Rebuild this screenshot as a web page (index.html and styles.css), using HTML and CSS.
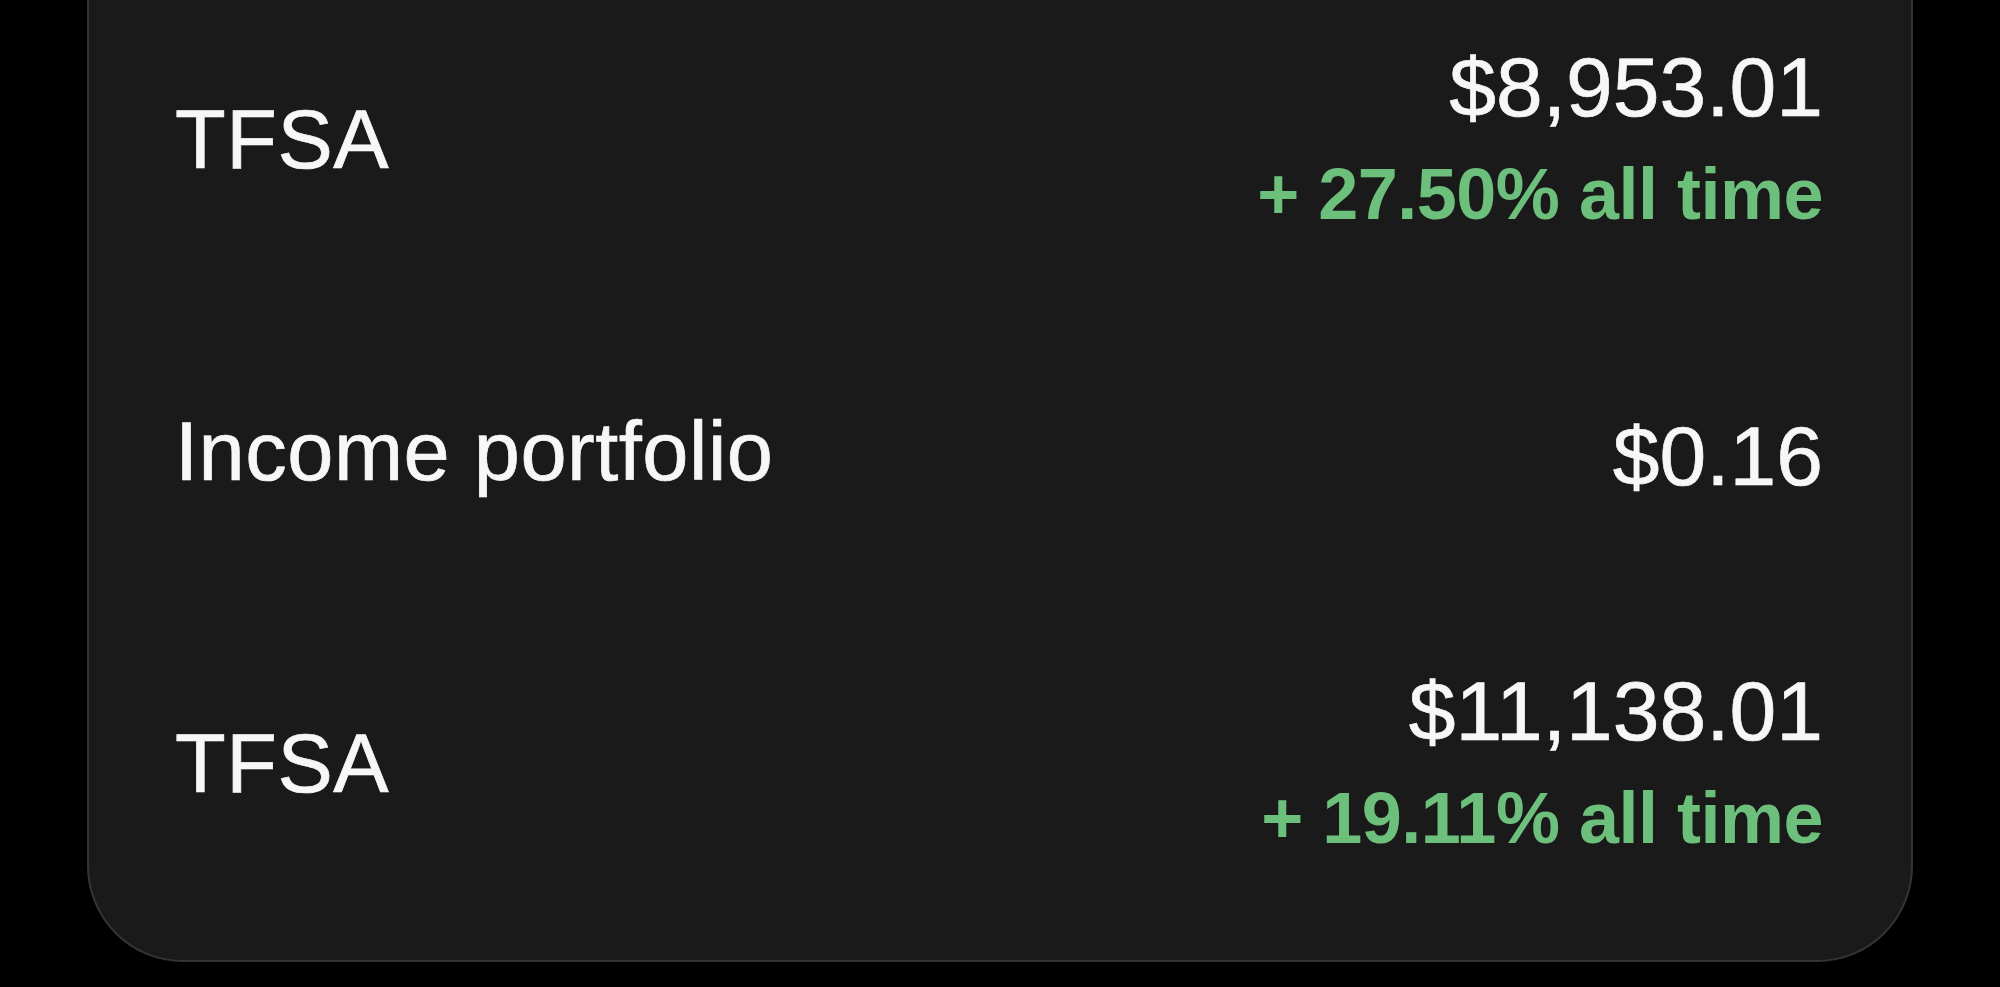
FILE: index.html
```html
<!DOCTYPE html>
<html>
<head>
    <title>Accounts</title>
    <link rel="stylesheet" href="styles.css">
</head>
<body>
    <div class="card">
        <div class="account">
            <div class="account-name">TFSA</div>
            <div class="account-values">
                <div class="balance">$8,953.01</div>
                <div class="gain">+ 27.50% all time</div>
            </div>
        </div>

        <div class="account">
            <div class="account-name">Income portfolio</div>
            <div class="account-values">
                <div class="balance">$0.16</div>
            </div>
        </div>

        <div class="account">
            <div class="account-name">TFSA</div>
            <div class="account-values">
                <div class="balance">$11,138.01</div>
                <div class="gain">+ 19.11% all time</div>
            </div>
        </div>
    </div>
</body>
</html>
```

FILE: styles.css
```css
body {
    margin: 0;
    background: #000;
    font-family: "Liberation Sans", Arial, sans-serif;
    color: #f7f7f7;
    overflow: hidden;
}
.card {
    margin: -100px 87px 0;
    padding: 81px 88px 41px 86px;
    background: #1a1a1a;
    border: 2px solid #343434;
    border-radius: 96px;
}
.account {
    height: 312px;
    display: flex;
    align-items: center;
    justify-content: space-between;
}
.account-name {
    font-size: 83px;
    line-height: 1;
    letter-spacing: 0.5px;
    -webkit-text-stroke: 0.7px #f7f7f7;
}
.account-values {
    padding-top: 10px;
    text-align: right;
}
.balance {
    font-size: 84px;
    line-height: 100px;
    -webkit-text-stroke: 0.7px #f7f7f7;
}
.gain {
    font-size: 72px;
    font-weight: bold;
    line-height: 114px;
    letter-spacing: -0.5px;
    color: #6cc07b;
}
```
